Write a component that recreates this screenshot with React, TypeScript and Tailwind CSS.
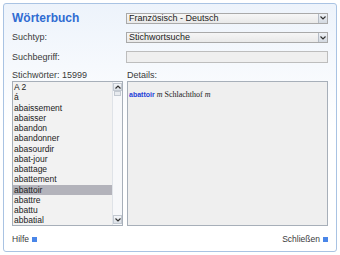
import React from "react";

const words = [
  "A 2",
  "á",
  "abaissement",
  "abaisser",
  "abandon",
  "abandonner",
  "abasourdir",
  "abat-jour",
  "abattage",
  "abattement",
  "abattoir",
  "abattre",
  "abattu",
  "abbatial",
];

function Chevron({ up }: { up?: boolean }) {
  return (
    <svg width="6" height="4" viewBox="0 0 6 4">
      <path
        d={up ? "M0.5 3.5 L3 1 L5.5 3.5" : "M0.5 0.5 L3 3 L5.5 0.5"}
        fill="none"
        stroke="#333"
        strokeWidth="1.2"
      />
    </svg>
  );
}

function Select({ value }: { value: string }) {
  return (
    <div className="flex-1 h-[11px] flex items-center border border-[#a9a9a9] bg-gradient-to-b from-[#f6f6f6] to-[#e9e9e9]">
      <span className="flex-1 pl-[2px] text-[9px] leading-none text-[#222]">{value}</span>
      <div className="w-[9px] h-[9px] flex items-center justify-center border-l border-[#b5bcc6] bg-gradient-to-b from-[#eef1f5] to-[#d3d9e1]">
        <Chevron />
      </div>
    </div>
  );
}

export default function App() {
  return (
    <div className="w-[340px] h-[255px] bg-white p-[3px] font-['Liberation_Sans',Arial,sans-serif]">
      <div className="h-[249px] rounded-[3px] border border-[#a9c3e3] bg-gradient-to-b from-[#edf3fb] via-white to-white px-[8px] flex flex-col text-[#3a3a3a]">
        <div className="flex items-center mt-[8px]">
          <div className="w-[114px] text-[12px] font-bold text-[#2f6cd2] leading-none">Wörterbuch</div>
          <Select value="Französisch - Deutsch" />
        </div>
        <div className="flex items-center mt-[8px]">
          <div className="w-[114px] text-[9px] leading-none">Suchtyp:</div>
          <Select value="Stichwortsuche" />
        </div>
        <div className="flex items-center mt-[8px]">
          <div className="w-[114px] text-[9px] leading-none">Suchbegriff:</div>
          <div className="flex-1 h-[12px] border border-[#bdbdbd] bg-[#efefef]" />
        </div>
        <div className="flex mt-[7px] h-[10px] items-center text-[9px] leading-none">
          <div className="w-[115px]">Stichwörter: 15999</div>
          <div>Details:</div>
        </div>
        <div className="flex gap-[4px] mt-[1px] h-[145px]">
          <div className="w-[111px] flex border border-[#a7afb9] bg-[#f2f2f2]">
            <div className="flex-1 flex flex-col">
              {words.map((w) => (
                <div
                  key={w}
                  className={`h-[10.25px] leading-[10.25px] text-[8.5px] pl-[1px] text-[#222] ${
                    w === "abattoir" ? "bg-[#b3b3bb]" : ""
                  }`}
                >
                  {w}
                </div>
              ))}
            </div>
            <div className="w-[10px] flex flex-col bg-[#f7f8fa] border-l border-[#dfe3e8]">
              <div className="h-[8px] mt-[1px] flex items-center justify-center border border-[#c3c9d1] bg-gradient-to-b from-[#f4f6f9] to-[#dce1e7]">
                <Chevron up />
              </div>
              <div className="h-[5px] mx-[1px] border border-[#c3c9d1] bg-[#e8ebef]" />
              <div className="flex-1" />
              <div className="h-[9px] mb-[1px] flex items-center justify-center border border-[#c3c9d1] bg-gradient-to-b from-[#f4f6f9] to-[#dce1e7]">
                <Chevron />
              </div>
            </div>
          </div>
          <div className="flex-1 border border-[#a7afb9] bg-[#efefef] px-[1px] pt-[2px]">
            <div className="leading-none whitespace-nowrap">
              <span className="text-[7px] font-bold text-[#1f3fd8]">abattoir</span>
              <span className="font-['Liberation_Serif','Times_New_Roman',serif] text-[8px] text-[#222]">
                {" "}
                <i>m</i> Schlachthof <i>m</i>
              </span>
            </div>
          </div>
        </div>
        <div className="flex justify-between items-center mt-[9px] text-[8.5px] leading-none">
          <div className="flex items-center gap-[3px]">
            <span>Hilfe</span>
            <span className="w-[5px] h-[5px] bg-[#4a86e8]" />
          </div>
          <div className="flex items-center gap-[3px]">
            <span>Schließen</span>
            <span className="w-[5px] h-[5px] bg-[#4a86e8]" />
          </div>
        </div>
      </div>
    </div>
  );
}
